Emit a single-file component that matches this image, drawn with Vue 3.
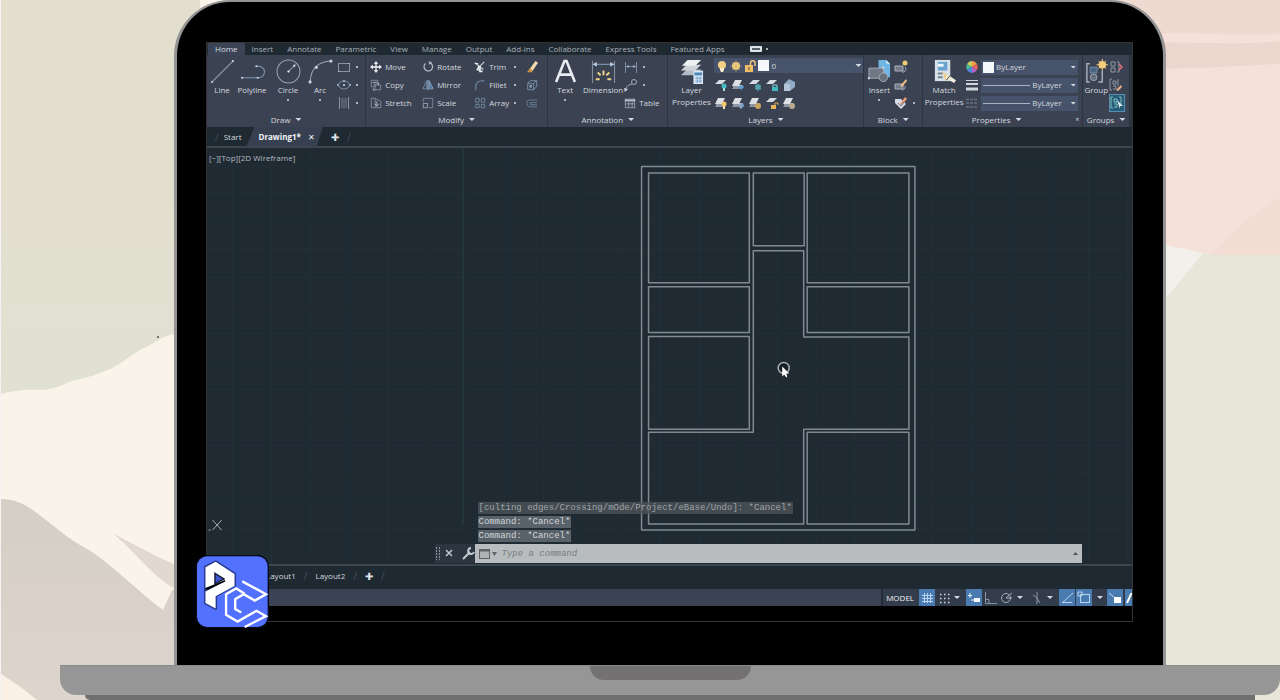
<script setup>
import { ref } from 'vue'

const menus = ['Home', 'Insert', 'Annotate', 'Parametric', 'View', 'Manage', 'Output', 'Add-ins', 'Collaborate', 'Express Tools', 'Featured Apps']
const modify = [
  [['move', 'Move'], ['copy', 'Copy'], ['stretch', 'Stretch']],
  [['rotate', 'Rotate'], ['mirror', 'Mirror'], ['scale', 'Scale']],
  [['trim', 'Trim', true], ['fillet', 'Fillet', true], ['array', 'Array', true]]
]
const layerTools = [
  ['l-off', 'l-iso', 'l-freeze', 'l-lock', 'l-match'],
  ['l-on', 'l-uniso', 'l-thaw', 'l-unlock', 'l-prev']
]
const history = [
  '[culting edges/Crossing/mOde/Project/eBase/Undo]: *Cancel*',
  'Command: *Cancel*',
  'Command: *Cancel*'
]
const rooms = [
  [649, 173, 101, 110], [754, 173, 51, 73], [808, 173, 102, 110],
  [649, 287, 101, 46], [808, 287, 102, 46], [649, 337, 101, 93], [808, 433, 102, 92]
]
const gridX = Array.from({ length: 24 }, (_, i) => 232 + i * 39)
const gridY = Array.from({ length: 15 }, (_, i) => 166 + i * 28)
const command = ref('')
</script>

<template>
  <div class="scene">
    <svg class="paper" viewBox="0 0 1280 700" preserveAspectRatio="none" aria-hidden="true">
      <defs>
        <linearGradient id="sage" x1="0" y1="0" x2="0" y2="1">
          <stop offset="0" stop-color="#e2dfce" /><stop offset=".5" stop-color="#e3dfcf" /><stop offset="1" stop-color="#e0e1d3" />
        </linearGradient>
        <linearGradient id="stone" x1="0" y1="0" x2="0" y2="1">
          <stop offset="0" stop-color="#d5cec6" /><stop offset="1" stop-color="#ddd5cc" />
        </linearGradient>
      </defs>
      <rect width="640" height="700" fill="#faf3e9" />
      <path d="M1 0H200V320L174 334C162 336 154 344 140 350C128 357 120 365 110 369C98 374 86 378 75 380C64 384 54 389 44 390C26 389 12 391 1 394Z" fill="url(#sage)" />
      <path d="M0 499C12 499 22 502 34 511C52 524 62 534 80 545C106 558 136 590 163 610L172 590H200V700H0Z" fill="url(#stone)" />
      <path d="M112 533C134 544 154 556 180 567V588L172 587C152 576 132 548 112 533Z" fill="#e1d9cf" />
      <path d="M0 673L22 688L37 700H0Z" fill="#faf0e5" />
      <rect width="1" height="700" fill="#f4f4f4" />
      <rect x="640" width="640" height="700" fill="#e7e6d9" />
      <path d="M1150 240H1214L1166 298H1150Z" fill="#f2f0eb" />
      <path d="M1100 0H1280V255H1213L1166 245H1100Z" fill="#f5e1d9" />
      <path d="M1280 197C1254 212 1230 234 1212 255H1280Z" fill="#f1ddd3" />
      <path d="M1100 0H1280V34C1240 36 1200 32 1100 34Z" fill="#efdad1" />
      <path d="M1100 42C1180 41 1230 46 1280 41V64C1230 66 1200 70 1100 69Z" fill="#ecd7ce" />
      <circle cx="158" cy="337" r="1" fill="#57534c" />
    </svg>

    <svg class="symbols" aria-hidden="true">
      <symbol id="line" viewBox="0 0 24 24"><path d="M2 22L22 2" stroke="#9aa4b1" /><circle cx="2" cy="22" r="1" fill="#d5dbe3" /><circle cx="22" cy="2" r="1" fill="#d5dbe3" /></symbol>
      <symbol id="polyline" viewBox="0 0 24 24"><path d="M1 18H18A5 5 0 0 0 18 7H14" stroke="#7d98b3" fill="none" /><circle cx="2" cy="18" r="1" fill="#c9d2dc" /><circle cx="17" cy="18" r="1" fill="#c9d2dc" /><circle cx="16" cy="7" r="1" fill="#c9d2dc" /></symbol>
      <symbol id="circle" viewBox="0 0 24 24"><circle cx="12" cy="12" r="11" stroke="#9aa4b1" fill="none" /><path d="M12 12L18 6" stroke="#9aa4b1" /><circle cx="12" cy="12" r="1" fill="#fff" /><path d="M16 6L19 5L18 8Z" fill="#d5dbe3" /></symbol>
      <symbol id="arc" viewBox="0 0 24 24"><path d="M2 22Q3 3 22 2" stroke="#9aa4b1" fill="none" /><circle cx="2" cy="22" r="1.500" fill="#c9d2dc" /><circle cx="8" cy="8" r="1.500" fill="#c9d2dc" /><circle cx="22" cy="2" r="1.500" fill="#c9d2dc" /></symbol>
      <symbol id="rect" viewBox="0 0 14 14"><rect x="1.500" y="3.500" width="11" height="8" fill="none" stroke="#8894a3" /><path d="M1 11h2v1H1zM11 3h2v1h-2z" fill="#a8b3c0" /></symbol>
      <symbol id="ellipse" viewBox="0 0 14 14"><ellipse cx="7" cy="7" rx="5.500" ry="4" fill="none" stroke="#7d92aa" /><circle cx="7" cy="7" r="1" fill="#c9d2dc" /><path d="M0 6h2v2H0zM12 6h2v2h-2zM6 2h2v2H6z" fill="#8fa0b3" /></symbol>
      <symbol id="hatch" viewBox="0 0 14 14"><path d="M2.500 1V13M11.500 1V13" stroke="#8894a3" /><path d="M5 2V12M7 2V12M9 2V12" stroke="#6c7a8b" /></symbol>
      <symbol id="move" viewBox="0 0 14 14"><path d="M7 2V12M2 7H12" stroke="#eef1f5" stroke-width="1.500" /><path d="M7 0L9.500 3.500H4.500ZM7 14L4.500 10.500H9.500ZM0 7L3.500 4.500V9.500ZM14 7L10.500 9.500V4.500Z" fill="#eef1f5" /></symbol>
      <symbol id="copy" viewBox="0 0 14 14"><path d="M1.500 1.500H9V6H5V9H1.500ZM6 7H12.500V12.500H6Z" fill="none" stroke="#8794a4" /><path d="M3 4H8M4 11V13H6M10 4V7" stroke="#b6c1cd" fill="none" /></symbol>
      <symbol id="stretch" viewBox="0 0 14 14"><path d="M1.500 1.500H6V12.500H1.500ZM6 2L12.500 5V12.500H6" fill="none" stroke="#8794a4" /><path d="M8 5V10M6 8L8 11L10 8" stroke="#b6c1cd" fill="none" /></symbol>
      <symbol id="rotate" viewBox="0 0 14 14"><path d="M9 2A5 5 0 1 1 4 3" stroke="#aeb7c3" stroke-width="1.500" fill="none" /><path d="M8 0L12 2L8 4.500Z" fill="#aeb7c3" /></symbol>
      <symbol id="mirror" viewBox="0 0 14 14"><path d="M5.500 2V11.500H1Z" fill="none" stroke="#7295b8" /><path d="M8.500 2V11.500H13Z" fill="#52799c" stroke="#82a9ce" /><path d="M7 1V13" stroke="#b7c6d5" /></symbol>
      <symbol id="scale" viewBox="0 0 14 14"><path d="M1.500 6V1.500H12.500V12.500H8" fill="none" stroke="#788b9f" /><rect x="1.500" y="7.500" width="5" height="5" fill="none" stroke="#91a3b5" /></symbol>
      <symbol id="trim" viewBox="0 0 14 14"><path d="M1 2L11 10M12 1L5 8" stroke="#c3cad3" stroke-width="1.500" /><path d="M6 6L4 10L7 11M7 6V12H10" stroke="#e5e9ee" stroke-width="2" fill="none" /><path d="M1 3H5" stroke="#fff" /></symbol>
      <symbol id="fillet" viewBox="0 0 14 14"><path d="M2 13V9Q2 2 12 2" fill="none" stroke="#66819b" stroke-width="1.500" /></symbol>
      <symbol id="array" viewBox="0 0 14 14"><path d="M2 1.500H6V6H2ZM8.500 1.500H12.500V6H8.500ZM2 8.500H6V12.500H2ZM8.500 8.500H12.500V12.500H8.500Z" fill="none" stroke="#758ca4" /></symbol>
      <symbol id="erase" viewBox="0 0 14 14"><path d="M3 11L11 0L14 2L8 11Z" fill="#f3ddb0" /><path d="M1 13H8L5 8Z" fill="#c98f3d" /></symbol>
      <symbol id="explode" viewBox="0 0 14 14"><path d="M2 5.500H9V12.500H2ZM2 5L5 2H12.500V9L9 12M9 5L12 2" fill="none" stroke="#7e9bb7" /><rect x="4" y="7" width="3" height="3" fill="#7e9bb7" /></symbol>
      <symbol id="offset" viewBox="0 0 14 14"><path d="M13 3.500H4Q1 3.500 1 7T4 11.500H13M13 6.500H5V9H13" fill="none" stroke="#71859b" /></symbol>
      <symbol id="text" viewBox="0 0 24 24"><path d="M3 22L11 2H13L21 22M6 15H18" fill="none" stroke="#e8ebef" stroke-width="2.500" /></symbol>
      <symbol id="dimension" viewBox="0 0 26 26"><path d="M1.500 2V25M24.500 2V25" stroke="#8b97a6" /><path d="M2 5.500H24" stroke="#8ba9c7" /><path d="M2 5.500L6 3V8ZM24 5.500L20 3V8Z" fill="#c0d3e6" /><path d="M13 12V17M7 14L10 17M19 14L16 17M5 21H9M17 21H21" stroke="#f3d488" stroke-width="2" /></symbol>
      <symbol id="linear" viewBox="0 0 14 14"><path d="M1.500 2V13M12.500 2V13M2 6.500H12" stroke="#7e8da0" /><path d="M2 6.500L5 5V8ZM12 6.500L9 5V8Z" fill="#9bb0c6" /></symbol>
      <symbol id="leader" viewBox="0 0 14 14"><path d="M1 13Q2 7 8 6" fill="none" stroke="#9fadbc" /><circle cx="10" cy="4" r="2.500" fill="none" stroke="#9fadbc" /><path d="M0 10L4 11L1 14Z" fill="#cdd5de" /></symbol>
      <symbol id="table" viewBox="0 0 14 14"><rect x="1.500" y="2.500" width="11" height="10" fill="none" stroke="#9ba6b4" /><path d="M1 4H13" stroke="#c0c8d2" stroke-width="2" /><path d="M2 8H12M5.500 4V12M9.500 4V12" stroke="#9ba6b4" /></symbol>
      <symbol id="layers" viewBox="0 0 26 26"><path d="M2 17L8 11H23L17 17Z" fill="#b5bbc4" /><path d="M2 12L8 6H23L17 12Z" fill="#ced2d9" /><path d="M3 7L9 1H23L17 7Z" fill="#edf0f3" /><rect x="15" y="12" width="10" height="14" fill="#d8e7f5" /><path d="M16 14H24V17H16Z" fill="#4d89bb" /><path d="M17 20H24M17 23H24M19 18V25M22 18V25" stroke="#79a5c9" /></symbol>
      <symbol id="bulb" viewBox="0 0 12 12"><circle cx="6" cy="5" r="4" fill="#f1cf83" /><path d="M4 8H8V10L7 12H5L4 10Z" fill="#f5eacb" /></symbol>
      <symbol id="sun" viewBox="0 0 12 12"><circle cx="6" cy="6" r="4" fill="#f1cd80" /><path d="M6 0V12M0 6H12M2 2L10 10M10 2L2 10" stroke="#d5b371" stroke-width=".5" /></symbol>
      <symbol id="unlock" viewBox="0 0 12 12"><path d="M1 5H9V12H1Z" fill="#edbd68" /><path d="M6.500 5V3A2 2 0 0 1 11 3V6" fill="none" stroke="#f0c67b" stroke-width="1.500" /><path d="M5 7V10" stroke="#5b451f" /></symbol>
      <symbol id="sheet" viewBox="0 0 14 14"><path d="M1 6L5 2H12L8 6Z" fill="#d6dae1" /></symbol>
      <symbol id="stack" viewBox="0 0 14 14"><path d="M1 11L5 7H12L8 11Z" fill="#aab1bc" /><path d="M1 8L4 2H11L8 8Z" fill="#dcdfe4" /><path d="M2 8H8V11H2Z" fill="#8f97a4" /></symbol>
      <symbol id="l-off" viewBox="0 0 14 14"><use href="#sheet" /><circle cx="10" cy="8" r="2.500" fill="#47bbc5" /><path d="M9 10H11V13H9Z" fill="#a6e3e6" /></symbol>
      <symbol id="l-iso" viewBox="0 0 14 14"><use href="#stack" /><path d="M7 8H13V9L10 12Z" fill="#5c9bd0" /></symbol>
      <symbol id="l-freeze" viewBox="0 0 14 14"><use href="#sheet" /><circle cx="10" cy="9" r="3" fill="#3f8a96" /><path d="M10 6V13M7 8L13 11M13 8L7 11" stroke="#5fb1b9" /></symbol>
      <symbol id="l-lock" viewBox="0 0 14 14"><use href="#sheet" /><path d="M7 9H13V13H7Z" fill="#3fb8be" /><path d="M8 9V7H12V9" fill="none" stroke="#8ad6d9" /></symbol>
      <symbol id="l-match" viewBox="0 0 14 14"><path d="M2 6L7 1L13 4V9L8 13H2Z" fill="#91abc4" /><path d="M2 6H8V13H2Z" fill="#b4c7d9" /></symbol>
      <symbol id="l-on" viewBox="0 0 14 14"><use href="#stack" /><circle cx="10" cy="8" r="2.500" fill="#f2c768" /><path d="M9 10H11V13H9Z" fill="#f7e9c4" /></symbol>
      <symbol id="l-uniso" viewBox="0 0 14 14"><use href="#stack" /><path d="M8 11L12 7L13 10L10 13Z" fill="#7caad4" /></symbol>
      <symbol id="l-thaw" viewBox="0 0 14 14"><use href="#stack" /><circle cx="10" cy="10" r="3" fill="#c8a35c" /></symbol>
      <symbol id="l-unlock" viewBox="0 0 14 14"><use href="#sheet" /><path d="M6 9H11V13H6Z" fill="#e8b45c" /><path d="M10 9V7H13V9" fill="none" stroke="#dba64c" /></symbol>
      <symbol id="l-prev" viewBox="0 0 14 14"><use href="#stack" /><circle cx="10" cy="10" r="3" fill="#bda889" /></symbol>
      <symbol id="insert" viewBox="0 0 26 26"><path d="M12 1H20L24 5V19H12Z" fill="#70b6e3" /><path d="M20 1V5H24Z" fill="#cce9fa" /><path d="M2 9.500H17V20H2Z" fill="#717986" stroke="#a2a9b3" /><circle cx="17" cy="19" r="4.500" fill="#69717e" stroke="#a2a9b3" /><path d="M1 19H3V21H1ZM16 8H18V10H16Z" fill="#dce2ea" /></symbol>
      <symbol id="b-new" viewBox="0 0 14 14"><path d="M1 6H9V11H1Z" fill="#727a86" stroke="#aab1bc" /><path d="M8 12A3 3 0 0 0 11 7" fill="none" stroke="#aab1bc" /><circle cx="11" cy="3" r="2.500" fill="#f1cb75" /></symbol>
      <symbol id="b-edit" viewBox="0 0 14 14"><path d="M1 6H9V11H1Z" fill="#727a86" stroke="#aab1bc" /><path d="M8 12A3 3 0 0 0 11 8" fill="none" stroke="#aab1bc" /><path d="M6 8L12 1L13 3L8 9Z" fill="#efb98a" /></symbol>
      <symbol id="b-attr" viewBox="0 0 14 14"><path d="M1 3H7L12 8L7 13L1 7Z" fill="#d8dce2" /><path d="M6 8L11 1L13 3L8 9Z" fill="#ee9b75" /><path d="M4 7L7 10L10 6" fill="none" stroke="#65707d" /></symbol>
      <symbol id="match" viewBox="0 0 26 26"><path d="M3 1H19V23H3Z" fill="#d8e0e8" /><path d="M6 3H16V12H6Z" fill="#69a4d0" /><path d="M6 5H12V8H6Z" fill="#eff5fa" /><path d="M6 15H11M6 19H11" stroke="#788390" stroke-width="2" /><path d="M11 13L17 18L14 23Z" fill="#f0cf84" /><path d="M16 16L25 22L23 25L14 20Z" fill="#f1eddf" /><path d="M15 22L19 17" stroke="#493f2e" /></symbol>
      <symbol id="wheel" viewBox="0 0 14 14"><path d="M7 7V1A6 6 0 0 1 12 4Z" fill="#f19a4a" /><path d="M7 7L12 4A6 6 0 0 1 12 10Z" fill="#e9635c" /><path d="M7 7L12 10A6 6 0 0 1 7 13Z" fill="#b365c6" /><path d="M7 7V13A6 6 0 0 1 2 10Z" fill="#4c84dd" /><path d="M7 7L2 10A6 6 0 0 1 2 4Z" fill="#47b89c" /><path d="M7 7L2 4A6 6 0 0 1 7 1Z" fill="#cbd05d" /></symbol>
      <symbol id="weight" viewBox="0 0 14 14"><path d="M1 2.500H13" stroke="#d1d6dd" /><path d="M1 6H13" stroke="#d1d6dd" stroke-width="2" /><path d="M1 11H13" stroke="#d1d6dd" stroke-width="3" /></symbol>
      <symbol id="ltype" viewBox="0 0 14 14"><path d="M1 3.500H13M1 7H13M1 11H13" stroke="#667280" stroke-width="1.500" stroke-dasharray="3 1" /></symbol>
      <symbol id="group" viewBox="0 0 26 26"><path d="M6 5H3V24H6M15 24H19V12" fill="none" stroke="#a7afbb" stroke-width="1.500" /><rect x="6.500" y="8.500" width="7" height="6" fill="#4b6683" stroke="#728caa" /><circle cx="10" cy="19" r="3.500" fill="#65707e" stroke="#9aa4b1" /><circle cx="19" cy="6" r="4" fill="#f3cd7c" /><path d="M19 0V12M13 6H25M15 2L23 10M23 2L15 10" stroke="#f3cd7c" /></symbol>
      <symbol id="ungroup" viewBox="0 0 14 14"><path d="M2 2H6V6H2ZM2 8H6V12H2Z" fill="none" stroke="#9099a6" /><path d="M8 2H10V12H8" fill="none" stroke="#9099a6" /><path d="M10 4L13 7L10 10" fill="none" stroke="#df6f80" stroke-width="1.500" /></symbol>
      <symbol id="gedit" viewBox="0 0 14 14"><path d="M3 1H1V12H3M4 3H7V6H4ZM4 8H7V11H4M9 1V8" fill="none" stroke="#9099a6" /><path d="M7 12L12 7L13 9L9 13Z" fill="#e6b18c" /></symbol>
      <symbol id="gsel" viewBox="0 0 14 14"><path d="M3 1H1V12H3M4 3H7V6H4ZM4 8H7V11H4M9 1H11V8" fill="none" stroke="#7ec2bc" /><path d="M7 4L13 10H10V13Z" fill="#e9eef3" /></symbol>
      <symbol id="s-grid" viewBox="0 0 16 16"><path d="M5.500 3V13M8.500 3V13M11.500 3V13M3 5.500H14M3 8.500H14M3 11.500H14" stroke="#b9d4ee" /></symbol>
      <symbol id="s-snap" viewBox="0 0 16 16"><path d="M4 4.500H14M4 8.500H14M4 12.500H14" stroke="#d4d9e0" stroke-width="1.500" stroke-dasharray="1.500 2.500" /></symbol>
      <symbol id="s-dyn" viewBox="0 0 16 16"><path d="M2 5.500H6M4 3V8" stroke="#e7f1fa" /><path d="M8 8H14V12H8Z" fill="#f0f6fc" /><path d="M5 10H8" stroke="#e7f1fa" /></symbol>
      <symbol id="s-ortho" viewBox="0 0 16 16"><path d="M2.500 2V13.500H14M2 9.500H6V13" fill="none" stroke="#8a94a2" /></symbol>
      <symbol id="s-polar" viewBox="0 0 16 16"><circle cx="7" cy="8" r="4.500" fill="none" stroke="#a2abb7" /><path d="M7 8L13 3M7 8H13" stroke="#a2abb7" /></symbol>
      <symbol id="s-iso" viewBox="0 0 16 16"><path d="M8 2V14M4 5L8 8L11 13" fill="none" stroke="#8b95a3" /></symbol>
      <symbol id="s-track" viewBox="0 0 16 16"><path d="M3 13L14 3M3 12.500H13" stroke="#b9d4ee" /></symbol>
      <symbol id="s-osnap" viewBox="0 0 16 16"><rect x="4.500" y="4.500" width="9" height="8" fill="none" stroke="#b9d4ee" /><path d="M2 2H6V6H2Z" fill="none" stroke="#b9d4ee" /></symbol>
      <symbol id="s-cycle" viewBox="0 0 16 16"><path d="M2 3L8 8" stroke="#cfe2f4" /><rect x="7" y="7" width="7" height="6" fill="#fff" /></symbol>
      <symbol id="s-anno" viewBox="0 0 16 16"><path d="M2 13L6 4L10 3V14" fill="none" stroke="#fff" stroke-width="2" /></symbol>
    </svg>

    <main class="lid">
      <div class="screen">
        <nav class="menus" aria-label="Ribbon tabs">
          <button v-for="(m, i) in menus" :key="m" :class="{ active: i === 0 }">{{ m }}</button>
          <button class="more" aria-label="Ribbon display"><span class="pill"></span><i class="dot"></i></button>
        </nav>

        <div class="ribbon">
          <section class="panel">
            <div class="tools">
              <button class="big w30"><svg class="i24"><use href="#line" /></svg>Line</button>
              <button class="big w30"><svg class="i24"><use href="#polyline" /></svg>Polyline</button>
              <button class="big w42"><svg class="i24"><use href="#circle" /></svg>Circle<i class="dot"></i></button>
              <button class="big w22"><svg class="i24"><use href="#arc" /></svg>Arc<i class="dot"></i></button>
              <div class="col indent">
                <button v-for="n in ['rect', 'ellipse', 'hatch']" :key="n" class="row" :aria-label="n"><svg class="i14"><use :href="'#' + n" /></svg><i class="dot"></i></button>
              </div>
            </div>
            <h2>Draw<i class="caret"></i></h2>
          </section>

          <section class="panel">
            <div class="tools indent">
              <div v-for="(c, k) in modify" :key="k" class="col w52">
                <button v-for="t in c" :key="t[1]" class="row"><svg class="i12"><use :href="'#' + t[0]" /></svg>{{ t[1] }}<i v-if="t[2]" class="dot push"></i></button>
              </div>
              <div class="col">
                <button v-for="n in ['erase', 'explode', 'offset']" :key="n" class="row" :aria-label="n"><svg class="i12"><use :href="'#' + n" /></svg></button>
              </div>
            </div>
            <h2>Modify<i class="caret"></i></h2>
          </section>

          <section class="panel">
            <div class="tools">
              <button class="big w34"><svg class="i24"><use href="#text" /></svg>Text<i class="dot"></i></button>
              <button class="big w42"><svg class="i24"><use href="#dimension" /></svg>Dimension</button>
              <div class="col">
                <button class="row" aria-label="Linear"><svg class="i14"><use href="#linear" /></svg><i class="dot"></i></button>
                <button class="row" aria-label="Leader"><svg class="i14"><use href="#leader" /></svg><i class="dot"></i></button>
                <button class="row"><svg class="i12"><use href="#table" /></svg>Table</button>
              </div>
            </div>
            <h2>Annotation<i class="caret"></i></h2>
          </section>

          <section class="panel">
            <div class="tools">
              <button class="big w46"><svg class="i24"><use href="#layers" /></svg>Layer<br />Properties</button>
              <div class="col grow">
                <div class="combo">
                  <svg class="i12"><use href="#bulb" /></svg><svg class="i12"><use href="#sun" /></svg><svg class="i12"><use href="#unlock" /></svg><span class="swatch"></span>
                  <select aria-label="Layer"><option>0</option></select><i class="caret"></i>
                </div>
                <div v-for="(r, k) in layerTools" :key="k" class="strip">
                  <button v-for="n in r" :key="n" :aria-label="n"><svg class="i14"><use :href="'#' + n" /></svg></button>
                </div>
              </div>
            </div>
            <h2>Layers<i class="caret"></i></h2>
          </section>

          <section class="panel">
            <div class="tools">
              <button class="big w30"><svg class="i24"><use href="#insert" /></svg>Insert<i class="dot"></i></button>
              <div class="col">
                <button class="row" aria-label="Create block"><svg class="i14"><use href="#b-new" /></svg></button>
                <button class="row" aria-label="Edit block"><svg class="i14"><use href="#b-edit" /></svg></button>
                <button class="row" aria-label="Edit attributes"><svg class="i14"><use href="#b-attr" /></svg><i class="dot"></i></button>
              </div>
            </div>
            <h2>Block<i class="caret"></i></h2>
          </section>

          <section class="panel">
            <div class="tools">
              <button class="big w42"><svg class="i24"><use href="#match" /></svg>Match<br />Properties</button>
              <div class="col grow">
                <div class="prop"><svg class="i14"><use href="#wheel" /></svg><div class="combo"><span class="swatch"></span><select aria-label="Color"><option>ByLayer</option></select><i class="caret"></i></div></div>
                <div class="prop"><svg class="i14"><use href="#weight" /></svg><div class="combo"><span class="rule"></span><select class="fit" aria-label="Lineweight"><option>ByLayer</option></select><i class="caret"></i></div></div>
                <div class="prop"><svg class="i14"><use href="#ltype" /></svg><div class="combo"><span class="rule"></span><select class="fit" aria-label="Linetype"><option>ByLayer</option></select><i class="caret"></i></div></div>
              </div>
            </div>
            <h2 class="early">Properties<i class="caret"></i><span class="launcher">×</span></h2>
          </section>

          <section class="panel">
            <div class="tools">
              <button class="big w26"><svg class="i24"><use href="#group" /></svg>Group</button>
              <div class="col">
                <button class="row" aria-label="Ungroup"><svg class="i14"><use href="#ungroup" /></svg></button>
                <button class="row" aria-label="Group edit"><svg class="i14"><use href="#gedit" /></svg></button>
                <button class="row on" aria-label="Group selection"><svg class="i14"><use href="#gsel" /></svg></button>
              </div>
            </div>
            <h2>Groups<i class="caret"></i></h2>
          </section>
        </div>

        <div class="files">
          <span class="slash">/</span>
          <button>Start</button>
          <button class="current"><b>Drawing1*</b><span>✕</span></button>
          <button class="plus" aria-label="New drawing">✚</button>
          <span class="slash">/</span>
        </div>

        <div class="canvas">
          <svg class="plan" viewBox="207 148 926 417" role="img" aria-label="Floor plan">
            <g stroke="#243038" stroke-width="1">
              <path v-for="x in gridX" :key="'x' + x" :d="`M${x} 148V565`" />
              <path v-for="y in gridY" :key="'y' + y" :d="`M207 ${y}H1133`" />
            </g>
            <path d="M463 148V526" stroke="#2b433c" />
            <g fill="none" stroke="#7f8a93" stroke-width="1.500" stroke-linejoin="round">
              <rect x="642" y="166.500" width="274" height="364.500" />
              <rect v-for="(r, i) in rooms" :key="i" :x="r[0]" :y="r[1]" :width="r[2]" :height="r[3]" />
              <path d="M754 251H804.500V337.500H910V430H804.500V525H649V433H754Z" />
            </g>
            <path d="M212 521L221 531M221 521L212 531M208 531H210" stroke="#a9b1b8" />
            <circle cx="784.500" cy="368.500" r="5.500" fill="#172026" stroke="#a8afb4" stroke-width="1.500" />
            <path d="M783 367V377L785 375L787 378L788 377L787 374H790Z" fill="#fff" />
          </svg>
          <span class="view">[−][Top][2D Wireframe]</span>
          <div class="console">
            <p v-for="(h, i) in history" :key="i" :class="{ old: i === 0 }"><span>{{ h }}</span></p>
            <div class="entry">
              <svg class="handles" viewBox="0 0 40 19" aria-hidden="true">
                <path d="M1.500 3V16M4.500 3V16" stroke="#8b939c" stroke-dasharray="2 1" />
                <path d="M11 6L17 12M17 6L11 12" stroke="#c3c9cf" stroke-width="1.500" />
                <path d="M28 15L35 8" stroke="#c3c9cf" stroke-width="2" />
                <path d="M36 4A3 3 0 1 0 39 8" stroke="#c3c9cf" stroke-width="2" fill="none" />
              </svg>
              <label class="field">
                <svg class="prompt" viewBox="0 0 18 12" aria-hidden="true"><rect x=".5" y="1.500" width="10" height="9" fill="#aeb2b4" stroke="#5d6367" /><path d="M0 2.500H11" stroke="#5d6367" stroke-width="2" /><path d="M13 4H18L15.500 8Z" fill="#5d6367" /></svg>
                <input v-model="command" type="text" aria-label="Command" placeholder="Type a command" />
                <i class="up"></i>
              </label>
            </div>
          </div>
        </div>

        <div class="layouts">
          <button>Layout1</button><span class="slash">/</span>
          <button>Layout2</button><span class="slash">/</span>
          <button class="plus" aria-label="New layout">✚</button><span class="slash">/</span>
        </div>

        <div class="status">
          <span class="fill"></span>
          <button class="model">MODEL</button>
          <button class="tog lit" aria-label="Grid"><svg class="i16"><use href="#s-grid" /></svg></button>
          <button class="tog" aria-label="Snap"><svg class="i16"><use href="#s-snap" /></svg><i class="caret"></i></button>
          <button class="tog lit" aria-label="Dynamic input"><svg class="i16"><use href="#s-dyn" /></svg></button>
          <button class="tog" aria-label="Ortho"><svg class="i16"><use href="#s-ortho" /></svg></button>
          <button class="tog" aria-label="Polar"><svg class="i16"><use href="#s-polar" /></svg><i class="caret"></i></button>
          <button class="tog" aria-label="Isometric"><svg class="i16"><use href="#s-iso" /></svg><i class="caret"></i></button>
          <button class="tog lit" aria-label="Tracking"><svg class="i16"><use href="#s-track" /></svg></button>
          <button class="tog lit" aria-label="Object snap"><svg class="i16"><use href="#s-osnap" /></svg></button>
          <button class="tog" aria-label="Object snap options"><i class="caret wide"></i></button>
          <button class="tog lit" aria-label="Selection cycling"><svg class="i16"><use href="#s-cycle" /></svg></button>
          <button class="tog lit cut" aria-label="Annotation"><svg class="i16"><use href="#s-anno" /></svg></button>
        </div>
      </div>

      <svg class="logo" viewBox="6 6 216 216" role="img" aria-label="PC logo">
        <rect x="6" y="6" width="216" height="216" rx="34" fill="#070a16" />
        <rect x="9" y="10" width="209" height="209" rx="30" fill="#5271ff" />
        <path d="M64 26L120 62V96L64 126V164L34 148V42Z" fill="#10162e" stroke="#263a91" stroke-width="9" stroke-linejoin="round" />
        <path d="M64 26L120 62V98L64 128V164L34 148V114L88 86L34 104V42Z" fill="#fff" />
        <path d="M62 60L89 77L62 91Z" fill="#3c56c9" stroke="#10162e" stroke-width="4" />
        <path d="M34 107L92 82" stroke="#05070f" stroke-width="5" />
        <g fill="none" stroke="#fff" stroke-width="7">
          <path d="M143 84L213 122L180 141L147 122L122 137V166L140 176" />
          <path d="M150 121L125 105L95 122V183L129 203L185 171L213 187L150 219" />
        </g>
      </svg>
    </main>
    <div class="base"><div class="notch"></div></div>
    <div class="foot"></div>
  </div>
</template>

<style>
body { margin: 0; }
</style>

<style scoped>
* { box-sizing: border-box; }
.scene {
  position: relative;
  display: flex;
  flex-direction: column;
  height: 100vh;
  overflow: hidden;
  font-family: "Open Sans", "Noto Sans", sans-serif;
  font-size: 8px;
  line-height: 12px;
  color: #d3d8df;
}
.paper { position: absolute; inset: 0; width: 100%; height: 100%; }
.symbols { position: absolute; width: 0; height: 0; }
button {
  border: 0;
  padding: 0;
  background: none;
  color: inherit;
  font: inherit;
  white-space: nowrap;
}
svg { flex: none; }
.i12 { width: 12px; height: 12px; }
.i14 { width: 14px; height: 14px; }
.i16 { width: 16px; height: 16px; }
.i24 { width: 25px; height: 25px; }
.lid {
  position: relative;
  flex: 1;
  display: flex;
  min-height: 0;
  margin: 0 114px 0 174px;
  padding: 40px 30px 43px 29px;
  border: 3px solid #949494;
  border-width: 2px 3px 0;
  border-radius: 56px 56px 0 0;
  background: #000;
}
.screen {
  flex: 1;
  min-width: 0;
  display: flex;
  flex-direction: column;
  padding-bottom: 15px;
  border: 1px solid #343434;
  overflow: hidden;
}
.menus { display: flex; height: 12px; padding-left: 1px; background: #1f2932; }
.menus button { padding: 0 7px; line-height: 10px; color: #a9b1bb; }
.menus .active { background: #3b4454; color: #d7dce2; }
.menus .more { display: flex; align-items: center; gap: 4px; margin-left: 11px; }
.pill { width: 12px; height: 6px; border-radius: 1px; border: 2px solid #dfe3e7; background: #59616b; }
.dot { flex: none; width: 2px; height: 2px; border-radius: 1px; background: #d5dae1; }
.caret { flex: none; width: 6px; height: 3px; background: #d5dae1; clip-path: polygon(0 0, 100% 0, 50% 100%); }
.ribbon {
  display: grid;
  grid-template-columns: 159fr 182fr 120fr 196fr 58fr 160fr 46fr;
  column-gap: 1px;
  padding-right: 3px;
  background: #2b3441;
}
.panel { min-width: 0; background: #3b4353; }
.tools { display: flex; height: 57px; padding-top: 3px; }
.tools.indent { padding-left: 4px; }
.big { display: flex; flex-direction: column; align-items: center; padding-top: 1px; line-height: 12px; }
.big .dot { margin-top: 3px; }
.w22 { width: 22px; }
.w26 { width: 26px; }
.w30 { width: 30px; }
.w34 { width: 34px; }
.w42 { width: 42px; }
.w46 { width: 46px; }
.col { display: flex; flex-direction: column; }
.col.indent { padding-left: 6px; }
.col.w52 { width: 52px; }
.grow { flex: 1; min-width: 0; }
.row { display: flex; align-items: center; gap: 3px; height: 18px; }
.row .dot { margin-left: 2px; }
.row .push { margin-left: auto; margin-right: 10px; }
.row.on { padding: 0 1px; background: #285b78; outline: 1px solid #5790b0; outline-offset: -1px; }
.combo {
  display: flex;
  align-items: center;
  gap: 2px;
  flex: 1;
  min-width: 0;
  height: 15px;
  padding: 0 2px;
  background: #47536a;
}
.col > .combo { flex: none; margin-bottom: 3px; }
.strip { display: flex; gap: 3px; height: 18px; }
.strip button { display: flex; align-items: center; }
.prop { display: flex; align-items: center; gap: 2px; height: 18px; padding-right: 4px; }
.swatch { width: 11px; height: 11px; background: #f6f7f8; }
.rule { flex: 1; height: 1px; background: #aab3bf; }
select {
  flex: 1;
  min-width: 0;
  height: 14px;
  padding: 0;
  border: 0;
  appearance: none;
  background: none;
  color: #d3d8df;
  font: inherit;
}
select.fit { flex: none; width: 36px; }
h2 {
  position: relative;
  display: flex;
  align-items: center;
  justify-content: center;
  gap: 5px;
  height: 15px;
  margin: 0;
  font-size: 8px;
  font-weight: 400;
}
h2.early { padding-right: 12px; }
.launcher { position: absolute; right: 3px; font-size: 7px; }
.files { display: flex; align-items: center; height: 21px; padding-left: 8px; border-bottom: 2px solid #3b464f; background: #1f2932; }
.files button { height: 19px; margin-left: 5px; }
.slash { color: #47525e; font-size: 10px; }
.files .current {
  display: flex;
  align-items: center;
  gap: 7px;
  padding: 0 8px 0 12px;
  background: #364050;
  clip-path: polygon(8px 0, 100% 0, calc(100% - 6px) 100%, 0 100%);
  color: #f0f2f5;
}
.files .plus { margin: 0 8px; }
.plus { color: #dfe3e8; font-size: 10px; }
.canvas { position: relative; flex: 1; min-height: 0; background: #202a33; }
.plan { display: block; width: 100%; height: 100%; }
.view { position: absolute; left: 2px; top: 4px; color: #b2b9c0; }
.console { position: absolute; left: 24.6%; right: 50px; bottom: 1px; font: 9px/12px "Liberation Mono", monospace; }
.console p { margin: 0 0 2px 43px; color: #d3d6d8; }
.console p span { display: block; width: fit-content; padding: 0 1px; background: #59626a; }
.console .old { color: #9ea4a8; }
.console .old span { background: #4c5459cc; }
.entry { display: flex; align-items: center; height: 19px; }
.handles { width: 40px; height: 19px; background: #2c3540; }
.field { flex: 1; display: flex; align-items: center; gap: 5px; height: 19px; padding: 0 4px; background: #b8bcbe; }
.prompt { width: 18px; height: 12px; }
.field input { flex: 1; min-width: 0; border: 0; padding: 0; outline: 0; background: none; color: #444; font: italic 9px/14px "Liberation Mono", monospace; }
.field input::placeholder { color: #777c7f; opacity: 1; }
.up { width: 5px; height: 3px; background: #4d5357; clip-path: polygon(50% 0, 100% 100%, 0 100%); }
.layouts { display: flex; align-items: center; gap: 8px; height: 25px; padding: 0 0 4px 59px; border-top: 2px solid #3b464f; background: #1f2932; }
.status { display: flex; height: 17px; background: #333c4b; overflow: hidden; }
.fill { flex: 1; background: #3b4254; border-right: 2px solid #232b36; }
.model { padding: 0 5px 0 3px; line-height: 16px; color: #eef0f3; }
.tog { display: flex; align-items: center; height: 17px; }
.tog.lit { margin-right: 1px; background: #4a7bb0; }
.tog .caret { margin: 0 6px 0 2px; }
.tog .wide { margin: 0 4px 0 4px; }
.tog.cut { width: 7px; margin: 0 0 0 1px; overflow: hidden; }
.logo { position: absolute; left: 19px; bottom: 37px; width: 73px; height: 73px; }
.base { position: relative; height: 30px; margin-left: 60px; border-radius: 0 0 16px 16px; background: #969696; border-top: 1px solid #8a8a8a; }
.notch { width: 161px; height: 14px; margin: 0 auto; border-radius: 0 0 14px 14px; background: #737171; }
.foot { position: relative; height: 5px; margin: 0 25px 0 85px; border-radius: 0 0 0 5px; background: #6f6f6f; }
</style>
